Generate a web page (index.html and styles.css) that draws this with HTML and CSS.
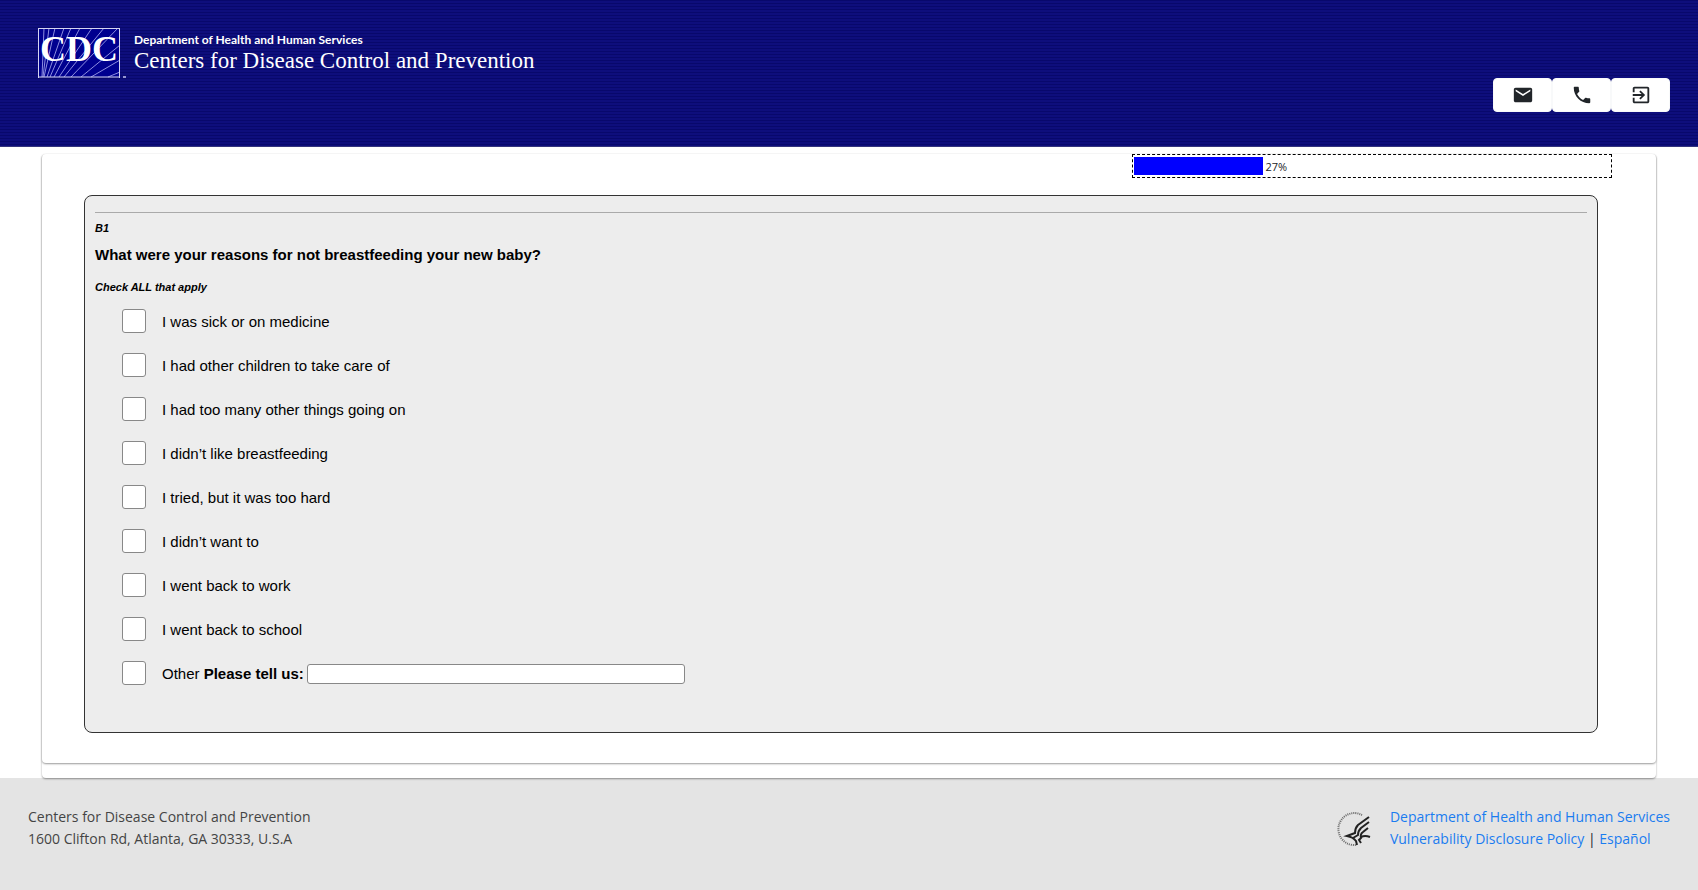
FILE: index.html
```html
<!DOCTYPE html>
<html lang="en">
  <head>
    <meta charset="UTF-8" />
    <meta name="viewport" content="width=device-width, initial-scale=1.0" />
    <title>CDC Survey</title>
    <link rel="stylesheet" href="styles.css">
  </head>
  <body>
    <header>
      <div class="brand">
        <svg class="logo" width="88" height="52" viewBox="0 0 88 52" role="img" aria-label="CDC">
          <rect x="0" y="1" width="82" height="49" fill="#00008f" />
          <g stroke="#8d8de0" stroke-width="1">
            <path d="M6 1 4 50M11 1 5 50M17 1 6 50M26 1 9 50M33 1 12 50M42 1 16 50M54 1 21 50M66 1 26 50M80 1 33 50M82 18 43 50M82 33 53 50M82 45 70 50" fill="none" />
          </g>
          <text class="logo-text" x="2" y="34">CDC</text>
          <path d="M0 1.500h82M0 50h82M.5 1v50M81.500 1v50" fill="none" stroke="#d5d5f2" />
          <path d="M85 49h3v2h-3z" fill="#9595d0" />
        </svg>
        <div class="brand-text">
          <div class="department">Department of Health and Human Services</div>
          <div class="agency">Centers for Disease Control and Prevention</div>
        </div>
      </div>
      <div class="toolbar">
        <button type="button" aria-label="Email">
          <svg width="22" height="22" viewBox="0 0 24 24"><path d="M20 4H4c-1.100 0-1.990.9-1.990 2L2 18c0 1.100.9 2 2 2h16c1.100 0 2-.9 2-2V6c0-1.100-.9-2-2-2zm0 4l-8 5-8-5V6l8 5 8-5v2z" /></svg>
        </button>
        <button type="button" aria-label="Phone">
          <svg width="22" height="22" viewBox="0 0 24 24"><path d="M6.620 10.790c1.440 2.830 3.760 5.140 6.590 6.590l2.200-2.200c.27-.27.67-.36 1.020-.24 1.120.37 2.330.57 3.570.57.55 0 1 .45 1 1V20c0 .55-.45 1-1 1-9.390 0-17-7.610-17-17 0-.55.45-1 1-1h3.500c.55 0 1 .45 1 1 0 1.250.2 2.450.57 3.570.11.35.03.74-.25 1.020l-2.200 2.200z" /></svg>
        </button>
        <button type="button" aria-label="Exit">
          <svg width="22" height="22" viewBox="0 0 24 24"><path d="M10.090 15.590L11.500 17l5-5-5-5-1.410 1.410L12.670 11H3v2h9.670l-2.580 2.590zM19 3H5c-1.110 0-2 .9-2 2v4h2V5h14v14H5v-4H3v4c0 1.100.89 2 2 2h14c1.100 0 2-.9 2-2V5c0-1.100-.9-2-2-2z" /></svg>
        </button>
      </div>
    </header>
    <main class="outer">
      <div class="card">
        <div class="progress">
          <div class="progress-bar" style="width: 27%"></div>
          <span>27%</span>
        </div>
        <form class="survey">
          <hr />
          <p class="number">B1</p>
          <h2>What were your reasons for not breastfeeding your new baby?</h2>
          <p class="hint">Check ALL that apply</p>
          <ul class="options">
            <li><input type="checkbox" id="q1" /><label for="q1">I was sick or on medicine</label></li>
            <li><input type="checkbox" id="q2" /><label for="q2">I had other children to take care of</label></li>
            <li><input type="checkbox" id="q3" /><label for="q3">I had too many other things going on</label></li>
            <li><input type="checkbox" id="q4" /><label for="q4">I didn’t like breastfeeding</label></li>
            <li><input type="checkbox" id="q5" /><label for="q5">I tried, but it was too hard</label></li>
            <li><input type="checkbox" id="q6" /><label for="q6">I didn’t want to</label></li>
            <li><input type="checkbox" id="q7" /><label for="q7">I went back to work</label></li>
            <li><input type="checkbox" id="q8" /><label for="q8">I went back to school</label></li>
            <li>
              <input type="checkbox" id="q9" /><label for="q9">Other <b>Please tell us:</b></label>
              <input type="text" id="other" aria-label="Other, please tell us" />
            </li>
          </ul>
        </form>
      </div>
    </main>
    <footer>
      <address>
        Centers for Disease Control and Prevention<br />
        1600 Clifton Rd, Atlanta, GA 30333, U.S.A
      </address>
      <div class="links">
        <svg width="36" height="36" viewBox="0 0 36 36" aria-hidden="true">
          <path d="M26 4A16 16 0 1 0 20 34" fill="none" stroke="#666" stroke-width="2" stroke-dasharray="1 1" />
          <g fill="none" stroke="#222" stroke-width="2">
            <path d="M33 6 22 14Q19 17 19 22L11 25Q17 26 20 30L21 34" />
            <path d="M33 11 25 17Q22 20 22 24L17 27" />
            <path d="M32 17 27 21Q24 23 25 27L23 29 25 32" />
            <path d="M25 26Q29 24 34 26" />
          </g>
        </svg>
        <div>
          <a href="#">Department of Health and Human Services</a><br />
          <a href="#">Vulnerability Disclosure Policy</a> | <a href="#">Español</a>
        </div>
      </div>
    </footer>
  </body>
</html>
```
FILE: styles.css
```css
* {
  box-sizing: border-box;
}
body {
  margin: 0;
  min-height: 100vh;
  display: flex;
  flex-direction: column;
  background: #fff;
  font-family: "Open Sans", sans-serif;
  font-size: 14px;
  color: #212529;
}
header {
  height: 147px;
  padding: 27px 28px 0 38px;
  background: repeating-linear-gradient(#08086c 0 1px, #0e0e7c 1px 3px);
  border-bottom: 1px solid #34347c;
  color: #fff;
}
.brand {
  display: flex;
  gap: 8px;
}
.logo-text {
  font-family: "Liberation Serif", serif;
  font-size: 36px;
  font-weight: bold;
  fill: #fff;
}
.department {
  padding-top: 5px;
  font-family: Lato, sans-serif;
  font-size: 12px;
  line-height: 16px;
  font-weight: bold;
}
.agency {
  font-family: "Liberation Serif", serif;
  font-size: 23px;
  line-height: 26px;
}
.toolbar {
  display: flex;
  justify-content: flex-end;
  margin-top: -1px;
}
button {
  width: 59px;
  height: 34px;
  padding: 0;
  display: flex;
  align-items: center;
  justify-content: center;
  background: #fff;
  border: 1px solid #f8f9fa;
  border-radius: 4px;
  cursor: pointer;
}
button svg {
  fill: #212529;
}
.outer {
  position: relative;
  margin: 7px 42px 0;
  padding-bottom: 15px;
  background: #fff;
}
.outer,
.card {
  border-radius: 4px;
  box-shadow: 0 1px 2px rgba(0, 0, 0, 0.4);
}
.card {
  padding-bottom: 30px;
}
.progress {
  width: 480px;
  height: 24px;
  margin: 0 44px 17px auto;
  padding: 2px 1px;
  display: flex;
  align-items: center;
  border: 1px dashed #000;
  font-size: 11px;
}
.progress-bar {
  height: 18px;
  margin-right: 3px;
  background: #00f;
}
.survey {
  margin: 0 58px 0 42px;
  padding: 16px 10px 27px;
  background: #ededed;
  border: 1px solid #333;
  border-radius: 8px;
  font-family: "Liberation Sans", Arial, sans-serif;
  color: #000;
}
hr {
  margin: 0;
  border: 0;
  border-top: 1px solid #aaa;
}
.number,
.hint {
  margin: 0;
  font-size: 11px;
  line-height: 16px;
  font-weight: bold;
  font-style: italic;
}
.number {
  padding-top: 7px;
}
h2 {
  margin: 9px 0 14px;
  font-size: 15px;
  line-height: 20px;
}
.options {
  margin: 14px 0 0;
  padding: 0 0 0 27px;
  list-style: none;
  font-size: 15px;
}
.options li {
  height: 44px;
  display: flex;
  align-items: flex-start;
  line-height: 26px;
}
input[type="checkbox"] {
  appearance: none;
  width: 24px;
  height: 24px;
  margin: 0 16px 0 0;
  background: #fff;
  border: 1px solid #888;
  border-radius: 3px;
}
input[type="checkbox"]:checked {
  background: #06f;
}
input[type="text"] {
  width: 378px;
  height: 20px;
  margin: 3px 0 0 3px;
  border: 1px solid #888;
  border-radius: 3px;
}
footer {
  flex: 1;
  padding: 28px;
  display: flex;
  justify-content: space-between;
  background: #e4e4e4;
  line-height: 22px;
}
address {
  font-style: normal;
  color: #444;
}
.links {
  display: flex;
  gap: 18px;
}
.links svg {
  margin-top: 5px;
}
a {
  color: #1a7cf0;
  text-decoration: none;
}
```
